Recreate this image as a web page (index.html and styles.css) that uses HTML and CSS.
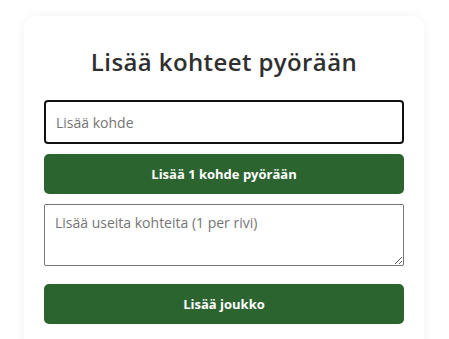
FILE: index.html
```html
<!DOCTYPE html>
<html lang="fi">
<head>
<meta charset="utf-8">
<title>Lisää kohteet pyörään</title>
<link rel="stylesheet" href="styles.css">
</head>
<body>
<main class="page">
  <section class="card">
    <h2 class="title">Lisää kohteet pyörään</h2>
    <form class="form">
      <input class="field" type="text" placeholder="Lisää kohde">
      <button class="btn" type="button">Lisää 1 kohde pyörään</button>
      <textarea class="area" placeholder="Lisää useita kohteita (1 per rivi)"></textarea>
      <button class="btn btn-bulk" type="button">Lisää joukko</button>
    </form>
  </section>
</main>
</body>
</html>
```

FILE: styles.css
```css
* { box-sizing: border-box; }
html, body { margin: 0; padding: 0; background: #ffffff; }
body { font-family: "Open Sans", "DejaVu Sans", sans-serif; color: #333333; }
.page { padding: 16px 0 0 24px; display: flex; }
.card {
  width: 400px;
  min-height: 340px;
  background: #ffffff;
  border-radius: 12px;
  box-shadow: 0 0 10px rgba(0,0,0,0.06);
  padding: 20px 20px 20px;
}
.title {
  margin: 8px 0 20px;
  font-size: 24px;
  font-weight: 600;
  line-height: 36px;
  letter-spacing: 0.4px;
  text-align: center;
  color: #2f2f2f;
}
.form { display: flex; flex-direction: column; }
.field {
  height: 44px;
  border: 2px solid #111111;
  border-radius: 4px;
  padding: 0 10px;
  font-family: inherit;
  font-size: 14px;
  color: #333;
  outline: none;
}
.field::placeholder, .area::placeholder { color: #757575; }
.btn {
  margin-top: 10px;
  height: 40px;
  border: none;
  border-radius: 5px;
  background: #2c6430;
  color: #ffffff;
  font-family: inherit;
  font-size: 13px;
  font-weight: 700;
}
.area {
  margin-top: 10px;
  height: 62px;
  border: 1px solid #767676;
  border-radius: 2px;
  padding: 8px 10px;
  font-family: inherit;
  font-size: 14px;
  resize: vertical;
}
.btn-bulk { margin-top: 18px; }
```
